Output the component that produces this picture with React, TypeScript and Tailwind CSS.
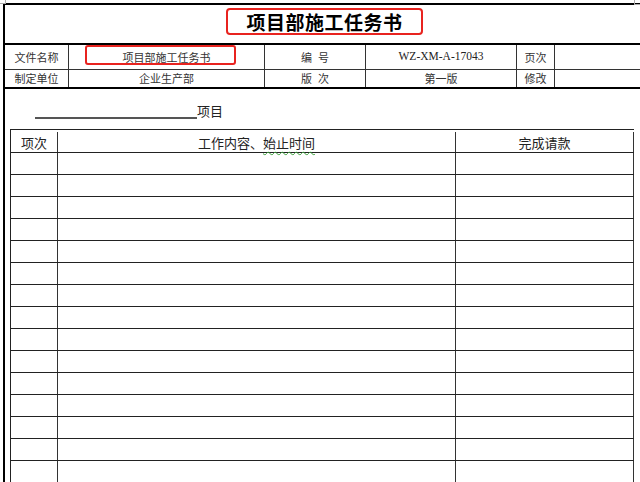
const rows = Array.from({ length: 16 }, (_, i) => i);

const Cell = ({ w, children, className = "" }: { w: string; children?: React.ReactNode; className?: string }) => (
  <div className={`${w} shrink-0 border-r border-[#333] flex items-center justify-center ${className}`}>{children}</div>
);

const App = () => {
  return (
    <div
      className="relative w-[640px] h-[482px] overflow-hidden bg-white text-[#222]"
      style={{ fontFamily: '"Noto Sans CJK SC", "Liberation Sans", sans-serif' }}
    >
      {/* corner marks */}
      <div className="absolute left-0 top-0 w-[6px] h-[4px] border-r border-b border-[#aaa]" />
      <div className="absolute left-[634px] top-0 w-[6px] h-[5px] border-l border-b border-[#aaa]" />

      <div className="ml-[3px] mt-[3px] w-[720px] border-l-2 border-t-2 border-black">
        {/* title */}
        <div className="h-[38px] flex items-start pt-[3px] pl-[221px]">
          <div className="h-[27px] w-[197px] border-2 border-[#e8231f] rounded-[4px] flex items-center justify-center text-[19px] font-bold leading-none tracking-[0.5px] text-black">
            项目部施工任务书
          </div>
        </div>

        {/* info rows */}
        <div className="border-t-2 border-black text-[11px] leading-none text-[#333]">
          <div className="flex h-[25px] border-b border-[#333]">
            <Cell w="w-[64px]">文件名称</Cell>
            <Cell w="w-[196px]" className="relative">
              <div className="absolute left-[16px] top-0 w-[151px] h-[20px] border-2 border-[#e8231f] rounded-[3px]" />
              项目部施工任务书
            </Cell>
            <Cell w="w-[101px]" className="gap-[6px]">
              <span>编</span>
              <span>号</span>
            </Cell>
            <Cell w="w-[151px]" className="text-[11.5px] text-[#222]">
              <span style={{ fontFamily: '"Liberation Serif", serif' }}>WZ-XM-A-17043</span>
            </Cell>
            <Cell w="w-[38px]">页次</Cell>
            <div className="flex-1" />
          </div>
          <div className="flex h-[19px] border-b-2 border-black">
            <Cell w="w-[64px]">制定单位</Cell>
            <Cell w="w-[196px]">企业生产部</Cell>
            <Cell w="w-[101px]" className="gap-[6px]">
              <span>版</span>
              <span>次</span>
            </Cell>
            <Cell w="w-[151px]">第一版</Cell>
            <Cell w="w-[38px]">修改</Cell>
            <div className="flex-1" />
          </div>
        </div>

        {/* body */}
        <div className="text-[13px] leading-none text-[#222]">
          <div className="flex items-end h-[30px] pl-[30px]">
            <div className="w-[162px] border-b-2 border-[#555]" />
            <span className="pb-[2px]">项目</span>
          </div>

          <div className="mt-[10px] ml-[5px] w-[624px] border-l border-t border-[#222]">
            <div className="flex h-[23px] border-b border-[#222] pt-[2px]">
              <Cell w="w-[47px]" className="border-[#222]">项次</Cell>
              <Cell w="w-[398px]" className="border-[#222]">
                <span>
                  工作内容、
                  <span className="underline decoration-wavy decoration-[#3aa03a] decoration-1 underline-offset-[3px]">
                    始止时间
                  </span>
                </span>
              </Cell>
              <Cell w="w-[178px]" className="border-[#222]">完成请款</Cell>
            </div>
            {rows.map((r) => (
              <div key={r} className="flex h-[22px] border-b border-[#222]">
                <Cell w="w-[47px]" className="border-[#222]" />
                <Cell w="w-[398px]" className="border-[#222]" />
                <Cell w="w-[178px]" className="border-[#222]" />
              </div>
            ))}
          </div>
        </div>
      </div>
    </div>
  );
};

export default App;
